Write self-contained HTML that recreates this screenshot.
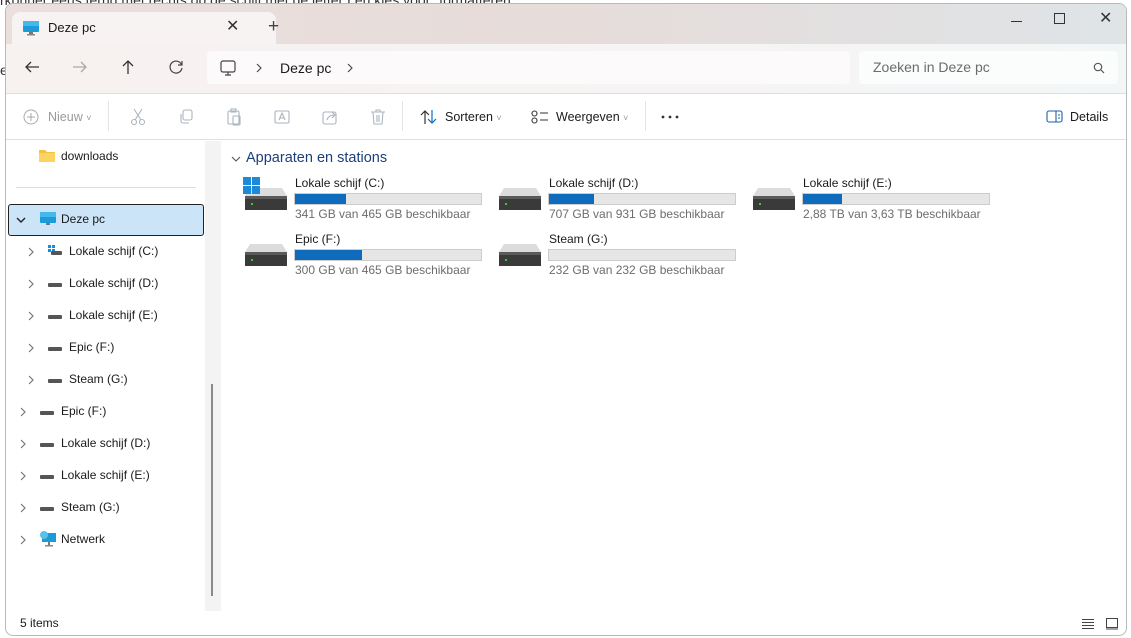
<!DOCTYPE html>
<html><head><meta charset="utf-8">
<style>
*{margin:0;padding:0;box-sizing:border-box}
body{width:1131px;height:638px;overflow:hidden;background:#fff;font-family:"Liberation Sans",sans-serif;font-size:12px;color:#1a1a1a;position:relative}
.a{position:absolute}
.win{left:5px;top:3px;width:1122px;height:633px;border:1px solid #b9b9b9;border-radius:8px;overflow:hidden;background:#fff}
.title{left:0;top:0;width:1122px;height:40px;background:linear-gradient(90deg,#eadfdc 0%,#e6dcda 50%,#dfe4e7 100%)}
.tab{left:6px;top:8px;width:264px;height:34px;background:#f7f3f2;border-radius:8px 8px 0 0}
.nav{left:0;top:40px;width:1122px;height:49px;background:linear-gradient(90deg,#f7f1f0,#f6f4f4 60%,#f3f6f7)}
.addr{left:201px;top:47px;width:643px;height:33px;background:#fcfafa;border-radius:4px}
.search{left:853px;top:47px;width:259px;height:33px;background:#fbfcfc;border-radius:4px;color:#6b6b6b;font-size:14px;padding:8px 0 0 14px}
.tool{left:0;top:89px;width:1122px;height:47px;background:#fff;border-top:1px solid #e3dede;border-bottom:1px solid #e0e0e0}
.t{font-size:12.5px;color:#1a1a1a}
.g{color:#9a9a9a}
.sep{width:1px;height:30px;background:#e5e5e5;top:97px}
.side{font-size:12px}
.bar{width:188px;height:12px;background:#e6e6e6;border:1px solid #ccc}
.bar i{display:block;height:10px;background:#0f6cbd}
.lbl{font-size:12px}
.sub{font-size:12px;color:#6d6d6d}
.ch{position:absolute;width:8px;height:10px}
</style></head><body>
<div class="a" style="left:0;top:-8px;font-size:14px;color:#333;font-family:'Liberation Sans',sans-serif">rkonner eens terug met rechts op de schijf met de letter I en kies voor "formatteren"</div>
<div class="a" style="left:0;top:62px;font-size:14px;color:#333">e</div>
<div class="a win">
 <div class="a title"></div>
 <div class="a tab"></div>
 <svg class="a" style="left:16px;top:16px" width="18" height="16"><rect x="1" y="1" width="16" height="11" rx="1" fill="#1b9bd8"/><rect x="1" y="1" width="16" height="5" fill="#45b7ea"/><rect x="7" y="12" width="4" height="2" fill="#777"/><rect x="5" y="14" width="8" height="1.5" fill="#888"/></svg>
 <div class="a" style="left:42px;top:16px;font-size:13px">Deze pc</div>
 <div class="a" style="left:220px;top:12px;font-size:16px;color:#333">✕</div>
 <div class="a" style="left:262px;top:12px;font-size:19px;color:#444;font-weight:300">+</div>
 <div class="a" style="left:1005px;top:17px;width:11px;height:1px;background:#333"></div>
 <div class="a" style="left:1048px;top:9px;width:11px;height:11px;border:1.3px solid #333"></div>
 <div class="a" style="left:1093px;top:4px;font-size:16px;color:#333">✕</div>
 <div class="a nav"></div>
 <svg class="a" style="left:18px;top:56px" width="16" height="14" fill="none" stroke="#333" stroke-width="1.3"><path d="M15 7H2M7 2L2 7l5 5"/></svg>
 <svg class="a" style="left:66px;top:56px" width="16" height="14" fill="none" stroke="#aaa" stroke-width="1.3"><path d="M1 7h13M9 2l5 5-5 5"/></svg>
 <svg class="a" style="left:115px;top:55px" width="14" height="16" fill="none" stroke="#333" stroke-width="1.3"><path d="M7 15V2M2 7l5-5 5 5"/></svg>
 <svg class="a" style="left:163px;top:56px" width="15" height="15" fill="none" stroke="#444" stroke-width="1.2"><path d="M12.5 4.5A6 6 0 1 0 13 8M13 1v4H9"/></svg>
 <div class="a addr"></div>
 <svg class="a" style="left:213px;top:55px" width="18" height="18" fill="none" stroke="#444" stroke-width="1.2"><rect x="2" y="2" width="14" height="11" rx="2"/><path d="M6 16h6M9 13v3"/></svg>
 <svg class="ch" style="left:249px;top:59px" viewBox="0 0 8 10" fill="none" stroke="#444" stroke-width="1.1"><path d="M2 1l4 4-4 4"/></svg>
 <div class="a" style="left:274px;top:56px;font-size:14px">Deze pc</div>
 <svg class="ch" style="left:340px;top:59px" viewBox="0 0 8 10" fill="none" stroke="#444" stroke-width="1.1"><path d="M2 1l4 4-4 4"/></svg>
 <div class="a search">Zoeken in Deze pc</div>
 <svg class="a" style="left:1087px;top:58px" width="12" height="12" fill="none" stroke="#555" stroke-width="1.2"><circle cx="5" cy="5" r="3.7"/><path d="M8 8l3 3"/></svg>
 <div class="a tool"></div>
 <svg class="a" style="left:17px;top:105px" width="16" height="16" fill="none" stroke="#aaa" stroke-width="1"><circle cx="8" cy="8" r="7"/><path d="M8 4v8M4 8h8"/></svg>
 <div class="a t g" style="left:42px;top:106px">Nieuw <span style="font-size:9px">˅</span></div>
 <div class="a sep" style="left:102px"></div>
 <svg class="a" style="left:124px;top:104px" width="16" height="18" fill="none" stroke="#a9b5c0" stroke-width="1.1"><circle cx="4" cy="14" r="2.5"/><circle cx="12" cy="14" r="2.5"/><path d="M5 12L12 1M11 12L4 1"/></svg>
 <svg class="a" style="left:172px;top:105px" width="16" height="16" fill="none" stroke="#a9b5c0" stroke-width="1.1"><rect x="5" y="1" width="9" height="10" rx="2"/><path d="M3 5v7a2 2 0 0 0 2 2h6"/></svg>
 <svg class="a" style="left:220px;top:104px" width="16" height="18" fill="none" stroke="#a9b5c0" stroke-width="1.1"><rect x="2" y="3" width="11" height="13" rx="1.5"/><rect x="5" y="1" width="5" height="3"/><rect x="7" y="8" width="7" height="9" rx="1"/></svg>
 <svg class="a" style="left:267px;top:104px" width="18" height="18" fill="none" stroke="#a9b5c0" stroke-width="1.1"><rect x="2" y="3" width="14" height="12" rx="1.5"/><path d="M6 12l3-7 3 7M7 10h4"/></svg>
 <svg class="a" style="left:316px;top:105px" width="16" height="16" fill="none" stroke="#a9b5c0" stroke-width="1.1"><rect x="1" y="3" width="13" height="12" rx="2"/><path d="M5 11c1-4 4-5 8-5M10 3l3 3-3 3"/></svg>
 <svg class="a" style="left:364px;top:104px" width="16" height="18" fill="none" stroke="#a9b5c0" stroke-width="1.1"><path d="M1 4h14M6 4V2h4v2M3 4l1 12h8l1-12M7 7v7M9 7v7"/></svg>
 <div class="a sep" style="left:396px"></div>
 <svg class="a" style="left:414px;top:105px" width="18" height="16" fill="none" stroke="#333" stroke-width="1.2"><path d="M5 15V2M1 6l4-4 4 4"/><path d="M12 1v13M8 10l4 4 4-4" stroke="#0f6cbd"/></svg>
 <div class="a t" style="left:439px;top:106px">Sorteren <span class="g" style="font-size:9px">˅</span></div>
 <svg class="a" style="left:525px;top:106px" width="18" height="14" fill="none" stroke="#333" stroke-width="1.1"><circle cx="3.5" cy="3.5" r="2.5"/><circle cx="3.5" cy="10.5" r="2.5"/><path d="M9 3h8M9 10h8"/></svg>
 <div class="a t" style="left:550px;top:106px">Weergeven <span class="g" style="font-size:9px">˅</span></div>
 <div class="a sep" style="left:639px"></div>
 <svg class="a" style="left:655px;top:111px" width="18" height="4" fill="#333"><circle cx="2" cy="2" r="1.4"/><circle cx="9" cy="2" r="1.4"/><circle cx="16" cy="2" r="1.4"/></svg>
 <svg class="a" style="left:1040px;top:106px" width="17" height="13" fill="none" stroke="#1a5fa8" stroke-width="1.1"><rect x="1" y="1" width="15" height="11" rx="2"/><path d="M10 1v11M12 5h2M12 8h2"/></svg>
 <div class="a t" style="left:1064px;top:106px">Details</div>

 <!-- sidebar -->
 <div class="a" style="left:199px;top:137px;width:16px;height:470px;background:#f3f3f3"></div>
 <div class="a" style="left:205px;top:380px;width:2px;height:212px;background:#8a8a8a"></div>
 <svg class="a" style="left:32px;top:144px" width="18" height="15"><path d="M1 2h6l2 2h8v10H1z" fill="#f4c142"/><path d="M1 5h16v9H1z" fill="#fcd462"/></svg>
 <div class="a side" style="left:55px;top:145px">downloads</div>
 <div class="a" style="left:10px;top:183px;width:180px;height:1px;background:#ddd"></div>
 <div class="a" style="left:2px;top:200px;width:196px;height:32px;background:#cce4f7;border:1px solid #222;border-radius:3px"></div>
 <svg class="a" style="left:10px;top:212px" width="10" height="8" fill="none" stroke="#222" stroke-width="1.4"><path d="M1 2l4 4 4-4"/></svg>
 <svg class="a" style="left:33px;top:207px" width="18" height="16"><rect x="1" y="1" width="16" height="11" rx="1" fill="#1b9bd8"/><rect x="1" y="1" width="16" height="5" fill="#45b7ea"/><rect x="7" y="12" width="4" height="2" fill="#777"/></svg>
 <div class="a side" style="left:55px;top:208px">Deze pc</div>

 <svg class="ch" style="left:21px;top:243px" viewBox="0 0 8 10" fill="none" stroke="#777" stroke-width="1.2"><path d="M2 1l4 4-4 4"/></svg><svg class="a" style="left:41px;top:241px" width="16" height="12"><rect x="1" y="0" width="3" height="3" fill="#1b8ad8"/><rect x="5" y="0" width="3" height="3" fill="#1b8ad8"/><rect x="1" y="4" width="3" height="3" fill="#1b8ad8"/><rect x="5" y="4" width="3" height="3" fill="#1b8ad8"/><rect x="4" y="6" width="11" height="4" rx="1" fill="#555"/></svg><div class="a side" style="left:63px;top:240px">Lokale schijf (C:)</div>
 <svg class="ch" style="left:21px;top:275px" viewBox="0 0 8 10" fill="none" stroke="#777" stroke-width="1.2"><path d="M2 1l4 4-4 4"/></svg><div class="a" style="left:42px;top:279px;width:14px;height:4px;background:#555;border-radius:1px"></div><div class="a side" style="left:63px;top:272px">Lokale schijf (D:)</div>
 <svg class="ch" style="left:21px;top:307px" viewBox="0 0 8 10" fill="none" stroke="#777" stroke-width="1.2"><path d="M2 1l4 4-4 4"/></svg><div class="a" style="left:42px;top:311px;width:14px;height:4px;background:#555;border-radius:1px"></div><div class="a side" style="left:63px;top:304px">Lokale schijf (E:)</div>
 <svg class="ch" style="left:21px;top:339px" viewBox="0 0 8 10" fill="none" stroke="#777" stroke-width="1.2"><path d="M2 1l4 4-4 4"/></svg><div class="a" style="left:42px;top:343px;width:14px;height:4px;background:#555;border-radius:1px"></div><div class="a side" style="left:63px;top:336px">Epic (F:)</div>
 <svg class="ch" style="left:21px;top:371px" viewBox="0 0 8 10" fill="none" stroke="#777" stroke-width="1.2"><path d="M2 1l4 4-4 4"/></svg><div class="a" style="left:42px;top:375px;width:14px;height:4px;background:#555;border-radius:1px"></div><div class="a side" style="left:63px;top:368px">Steam (G:)</div>
 <svg class="ch" style="left:13px;top:403px" viewBox="0 0 8 10" fill="none" stroke="#777" stroke-width="1.2"><path d="M2 1l4 4-4 4"/></svg><div class="a" style="left:34px;top:407px;width:14px;height:4px;background:#555;border-radius:1px"></div><div class="a side" style="left:55px;top:400px">Epic (F:)</div>
 <svg class="ch" style="left:13px;top:435px" viewBox="0 0 8 10" fill="none" stroke="#777" stroke-width="1.2"><path d="M2 1l4 4-4 4"/></svg><div class="a" style="left:34px;top:439px;width:14px;height:4px;background:#555;border-radius:1px"></div><div class="a side" style="left:55px;top:432px">Lokale schijf (D:)</div>
 <svg class="ch" style="left:13px;top:467px" viewBox="0 0 8 10" fill="none" stroke="#777" stroke-width="1.2"><path d="M2 1l4 4-4 4"/></svg><div class="a" style="left:34px;top:471px;width:14px;height:4px;background:#555;border-radius:1px"></div><div class="a side" style="left:55px;top:464px">Lokale schijf (E:)</div>
 <svg class="ch" style="left:13px;top:499px" viewBox="0 0 8 10" fill="none" stroke="#777" stroke-width="1.2"><path d="M2 1l4 4-4 4"/></svg><div class="a" style="left:34px;top:503px;width:14px;height:4px;background:#555;border-radius:1px"></div><div class="a side" style="left:55px;top:496px">Steam (G:)</div>
 <svg class="ch" style="left:13px;top:531px" viewBox="0 0 8 10" fill="none" stroke="#777" stroke-width="1.2"><path d="M2 1l4 4-4 4"/></svg><svg class="a" style="left:33px;top:526px" width="18" height="17"><rect x="3" y="3" width="14" height="9" fill="#1b9bd8"/><circle cx="5" cy="5" r="4" fill="#5cc0ea"/><rect x="9" y="12" width="2" height="3" fill="#777"/><rect x="6" y="15" width="8" height="1.5" fill="#888"/></svg><div class="a side" style="left:55px;top:528px">Netwerk</div>

 <div class="a" style="left:14px;top:612px;font-size:12px">5 items</div>
 <svg class="a" style="left:1075px;top:614px" width="14" height="12" stroke="#444" stroke-width="1"><path d="M1 1.5h12M1 4.5h12M1 7.5h12M1 10.5h12"/></svg>
 <svg class="a" style="left:1099px;top:613px" width="14" height="13" fill="none" stroke="#444" stroke-width="1"><rect x="1.5" y="1.5" width="11" height="9"/><path d="M1 12h12"/></svg>

 <!-- content -->
 <svg class="a" style="left:225px;top:151px" width="10" height="8" fill="none" stroke="#555" stroke-width="1.1"><path d="M1 2l4 4 4-4"/></svg>
 <div class="a" style="left:240px;top:146px;font-size:14.5px;color:#1d3f7a">Apparaten en stations</div>
</div>
<!-- drives (page coords) -->
<svg width="0" height="0" style="position:absolute"><defs><g id="d"><path d="M5 0h32l5 8H0z" fill="#dcdcdc"/><path d="M0 8h42v14H0z" fill="#3a3a3a"/><path d="M0 8h42v3H0z" fill="#5a5a5a"/><rect x="6" y="15" width="2" height="2" fill="#3ccb3c"/></g></defs></svg>
<svg class="a" style="left:245px;top:188px" width="42" height="22"><use href="#d"/></svg>
<svg class="a" style="left:243px;top:177px" width="18" height="18"><rect x="0" y="0" width="8" height="8" fill="#1b8ad8"/><rect x="9" y="0" width="8" height="8" fill="#1b8ad8"/><rect x="0" y="9" width="8" height="8" fill="#1b8ad8"/><rect x="9" y="9" width="8" height="8" fill="#1b8ad8"/></svg>
<div class="a lbl" style="left:295px;top:176px">Lokale schijf (C:)</div><div class="a bar" style="left:294px;top:193px"><i style="width:51px"></i></div><div class="a sub" style="left:295px;top:207px">341 GB van 465 GB beschikbaar</div>
<svg class="a" style="left:499px;top:188px" width="42" height="22"><use href="#d"/></svg>
<div class="a lbl" style="left:549px;top:176px">Lokale schijf (D:)</div><div class="a bar" style="left:548px;top:193px"><i style="width:45px"></i></div><div class="a sub" style="left:549px;top:207px">707 GB van 931 GB beschikbaar</div>
<svg class="a" style="left:753px;top:188px" width="42" height="22"><use href="#d"/></svg>
<div class="a lbl" style="left:803px;top:176px">Lokale schijf (E:)</div><div class="a bar" style="left:802px;top:193px"><i style="width:39px"></i></div><div class="a sub" style="left:803px;top:207px">2,88 TB van 3,63 TB beschikbaar</div>
<svg class="a" style="left:245px;top:244px" width="42" height="22"><use href="#d"/></svg>
<div class="a lbl" style="left:295px;top:232px">Epic (F:)</div><div class="a bar" style="left:294px;top:249px"><i style="width:67px"></i></div><div class="a sub" style="left:295px;top:263px">300 GB van 465 GB beschikbaar</div>
<svg class="a" style="left:499px;top:244px" width="42" height="22"><use href="#d"/></svg>
<div class="a lbl" style="left:549px;top:232px">Steam (G:)</div><div class="a bar" style="left:548px;top:249px"><i style="width:0"></i></div><div class="a sub" style="left:549px;top:263px">232 GB van 232 GB beschikbaar</div>
</body></html>
